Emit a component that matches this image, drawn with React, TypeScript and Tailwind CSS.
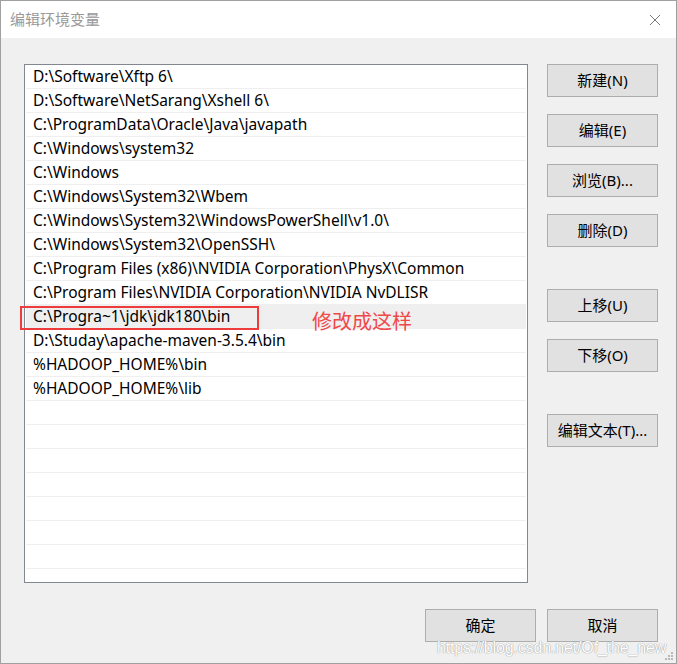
import React from "react";

const rows = [
  "D:\\Software\\Xftp 6\\",
  "D:\\Software\\NetSarang\\Xshell 6\\",
  "C:\\ProgramData\\Oracle\\Java\\javapath",
  "C:\\Windows\\system32",
  "C:\\Windows",
  "C:\\Windows\\System32\\Wbem",
  "C:\\Windows\\System32\\WindowsPowerShell\\v1.0\\",
  "C:\\Windows\\System32\\OpenSSH\\",
  "C:\\Program Files (x86)\\NVIDIA Corporation\\PhysX\\Common",
  "C:\\Program Files\\NVIDIA Corporation\\NVIDIA NvDLISR",
  "C:\\Progra~1\\jdk\\jdk180\\bin",
  "D:\\Studay\\apache-maven-3.5.4\\bin",
  "%HADOOP_HOME%\\bin",
  "%HADOOP_HOME%\\lib",
];

const font = "font-['Noto_Sans','Noto_Sans_CJK_SC',sans-serif]";

function Btn({ label, className = "" }: { label: string; className?: string }) {
  return (
    <div
      className={`w-[111px] h-[33px] bg-[#e1e1e1] border border-[#adadad] flex items-center justify-center text-[15px] text-black ${className}`}
    >
      {label}
    </div>
  );
}

export default function App() {
  const all = Array.from({ length: 22 }, (_, i) => rows[i] ?? "");
  return (
    <div className={`w-[677px] h-[664px] border border-[#a0a0a0] bg-[#f0f0f0] flex flex-col relative overflow-hidden ${font}`}>
      <div className="h-[37px] bg-white flex items-center justify-between pl-[9px] pr-[15px] shrink-0">
        <span className="text-[15px] text-[#999999] font-['Noto_Sans_CJK_SC',sans-serif]">编辑环境变量</span>
        <svg width="12" height="12" viewBox="0 0 12 12">
          <path d="M1 1 L11 11 M11 1 L1 11" stroke="#777" strokeWidth="1" />
        </svg>
      </div>
      <div className="flex pl-[23px] pt-[26px]">
        <div className="w-[504px] h-[519px] border border-[#828790] bg-white overflow-hidden flex flex-col px-px shrink-0">
          {all.map((r, i) => (
            <div
              key={i}
              className={`h-[24px] shrink-0 border-b border-[#efefef] pl-[7px] flex items-center text-[15.5px] text-black whitespace-nowrap ${
                i === 10 ? "bg-[#efefef]" : ""
              }`}
            >
              {r}
            </div>
          ))}
        </div>
        <div className="ml-[19px] flex flex-col">
          <Btn label="新建(N)" />
          <Btn label="编辑(E)" className="mt-[17px]" />
          <Btn label="浏览(B)..." className="mt-[17px]" />
          <Btn label="删除(D)" className="mt-[17px]" />
          <Btn label="上移(U)" className="mt-[42px]" />
          <Btn label="下移(O)" className="mt-[17px]" />
          <Btn label="编辑文本(T)..." className="mt-[42px]" />
        </div>
      </div>
      <div className="flex justify-end gap-[11px] pr-[18px] mt-[26px]">
        <Btn label="确定" />
        <Btn label="取消" />
      </div>

      {/* red annotation box */}
      <div className="absolute left-[19px] top-[305px] w-[239px] h-[24px] border-2 border-[#ee3b3b]" />
      <div className="absolute left-[311px] top-[308px] text-[20px] text-[#f04848] font-['Noto_Sans_CJK_SC',sans-serif] leading-[24px]">
        修改成这样
      </div>

      {/* watermark */}
      <div className="absolute left-[436px] top-[637px] text-[16px] leading-[20px] tracking-[-0.15px] whitespace-nowrap text-white font-['Liberation_Sans',sans-serif] [text-shadow:0_0_1px_#9a9a9a,0_0_1px_#9a9a9a]">
        https://blog.csdn.net/Of_the_new
      </div>

      {/* resize grip */}
      <svg className="absolute right-[2px] bottom-[2px]" width="10" height="10" viewBox="0 0 10 10">
        <rect x="7" y="1" width="2" height="2" fill="#b8b8b8" />
        <rect x="4" y="4" width="2" height="2" fill="#b8b8b8" />
        <rect x="7" y="4" width="2" height="2" fill="#b8b8b8" />
        <rect x="1" y="7" width="2" height="2" fill="#b8b8b8" />
        <rect x="4" y="7" width="2" height="2" fill="#b8b8b8" />
        <rect x="7" y="7" width="2" height="2" fill="#b8b8b8" />
      </svg>
    </div>
  );
}
